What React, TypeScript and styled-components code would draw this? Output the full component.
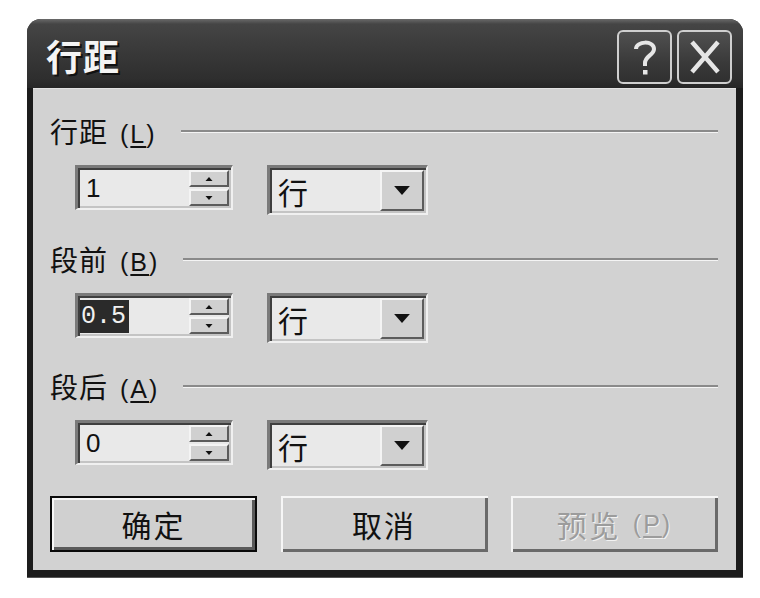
import React from "react";
import styled, { createGlobalStyle } from "styled-components";

const Global = createGlobalStyle`
  html, body { margin: 0; padding: 0; background: #ffffff; }
  body { font-family: "Noto Sans CJK SC", "Noto Sans", sans-serif; }
`;

const Page = styled.div`
  padding: 19px 0 0 27px;
  width: 760px;
  height: 598px;
  box-sizing: border-box;
`;

const Window = styled.div`
  width: 716px;
  height: 559px;
  background: #1c1c1c;
  border-radius: 14px 14px 0 0;
  display: flex;
  flex-direction: column;
  box-sizing: border-box;
  padding: 0 7px 7px 6px;
  border-bottom: 1px solid #555;
`;

const TitleBar = styled.div`
  height: 69px;
  margin: 0 -7px 0 -6px;
  border-radius: 14px 14px 0 0;
  background: linear-gradient(#6a6a6a 0px, #454545 5px, #3a3a3a 30px, #2e2e2e 60px, #262626 69px);
  display: flex;
  align-items: center;
  padding: 0 11px 0 19px;
  box-sizing: border-box;
`;

const Title = styled.div`
  flex: 1;
  color: #f4f4f4;
  font-size: 36px;
  font-weight: 700;
  letter-spacing: 1px;
  text-shadow: 2px 2px 0 #111;
  padding-top: 2px;
`;

const CapButton = styled.div`
  width: 55px;
  height: 54px;
  margin-left: 5px;
  box-sizing: border-box;
  border: 2px solid #cfcfcf;
  border-radius: 6px;
  background: linear-gradient(#505050 0%, #3a3a3a 60%, #303030 100%);
  display: flex;
  align-items: center;
  justify-content: center;
  margin-top: 6px;
`;

const Body = styled.div`
  flex: 1;
  background: #d2d2d2;
  border-top: 1px solid #e2e2e2;
  padding: 22px 18px 18px 17px;
  display: flex;
  flex-direction: column;
`;

const Section = styled.div<{ $gapAfter: number }>`
  display: flex;
  flex-direction: column;
  margin-bottom: ${(p) => p.$gapAfter}px;
`;

const LabelRow = styled.div`
  height: 40px;
  display: flex;
  align-items: center;
`;

const Label = styled.div`
  font-size: 28px;
  color: #111;
  white-space: nowrap;
  letter-spacing: 1px;
`;

const Mnemonic = styled.span`
  font-family: "Liberation Sans", sans-serif;
  font-size: 25px;
  margin-left: 12px;
  letter-spacing: 2px;
  & u { text-decoration-thickness: 2px; text-underline-offset: 3px; }
`;

const Separator = styled.div`
  flex: 1;
  margin-left: 24px;
  height: 0;
  border-top: 2px solid #8a8a8a;
  border-bottom: 1px solid #f4f4f4;
  margin-top: 1px;
`;

const InputRow = styled.div`
  display: flex;
  align-items: flex-start;
  margin-top: 14px;
  padding-left: 25px;
  gap: 34px;
  height: 50px;
`;

const Sunken = styled.div<{ $w: number; $h: number }>`
  width: ${(p) => p.$w}px;
  height: ${(p) => p.$h}px;
  box-sizing: border-box;
  border-top: 3px solid #7a7a7a;
  border-left: 3px solid #7a7a7a;
  border-right: 2px solid #f0f0f0;
  border-bottom: 2px solid #f0f0f0;
  box-shadow: inset 2px 2px 0 #3e3e3e, inset -2px -2px 0 #c4c4c4;
  background: #e9e9e9;
  display: flex;
  align-items: stretch;
`;

const Field = styled.div`
  flex: 1;
  display: flex;
  align-items: center;
  padding-left: 8px;
  font-family: "Liberation Sans", sans-serif;
  font-size: 26px;
  color: #111;
`;

const Selected = styled.span`
  background: #2a2a2a;
  color: #f0f0f0;
  font-family: "Liberation Mono", monospace;
  font-size: 25px;
  padding: 2px 3px 2px 1px;
  margin-left: -6px;
`;

const SpinCol = styled.div`
  width: 40px;
  display: flex;
  flex-direction: column;
  padding: 2px 2px 2px 0;
  gap: 2px;
`;

const Raised = styled.div`
  flex: 1;
  box-sizing: border-box;
  background: #d0d0d0;
  border-top: 2px solid #f4f4f4;
  border-left: 2px solid #f4f4f4;
  border-right: 2px solid #5c5c5c;
  border-bottom: 2px solid #5c5c5c;
  display: flex;
  align-items: center;
  justify-content: center;
`;

const ComboText = styled.div`
  flex: 1;
  display: flex;
  align-items: center;
  padding-left: 8px;
  font-size: 30px;
  color: #111;
`;

const DropBtn = styled(Raised)`
  flex: 0 0 44px;
  margin: 2px 2px 2px 0;
`;

const ButtonRow = styled.div`
  margin-top: auto;
  display: flex;
  justify-content: space-between;
`;

const PushButton = styled.div<{ $default?: boolean; $disabled?: boolean }>`
  width: 207px;
  height: 56px;
  box-sizing: border-box;
  background: #d0d0d0;
  border: ${(p) => (p.$default ? "2px solid #0a0a0a" : "0")};
  box-shadow: ${(p) =>
    p.$default
      ? "inset 2px 2px 0 #f6f6f6, inset -3px -3px 0 #5a5a5a"
      : "inset 2px 2px 0 #f6f6f6, inset -3px -3px 0 #6a6a6a"};
  display: flex;
  align-items: center;
  justify-content: center;
  font-size: 30px;
  color: ${(p) => (p.$disabled ? "#9c9c9c" : "#111")};
  text-shadow: ${(p) => (p.$disabled ? "1px 1px 0 #f2f2f2" : "none")};
  letter-spacing: 2px;
`;

const Arrow = ({ dir, size = 8 }: { dir: "up" | "down"; size?: number }) => (
  <svg width={size * 2} height={size} viewBox="0 0 16 8">
    {dir === "up" ? <polygon points="8,0 15,8 1,8" fill="#111" /> : <polygon points="1,0 15,0 8,8" fill="#111" />}
  </svg>
);

const SpinBox = ({ children }: { children: React.ReactNode }) => (
  <Sunken $w={158} $h={45}>
    <Field>{children}</Field>
    <SpinCol>
      <Raised>
        <Arrow dir="up" size={4} />
      </Raised>
      <Raised>
        <Arrow dir="down" size={4} />
      </Raised>
    </SpinCol>
  </Sunken>
);

const Combo = () => (
  <Sunken $w={161} $h={50}>
    <ComboText>行</ComboText>
    <DropBtn>
      <Arrow dir="down" size={9} />
    </DropBtn>
  </Sunken>
);

const sections: { label: string; key: string; value: React.ReactNode; gap: number }[] = [
  { label: "行距", key: "L", value: "1", gap: 24 },
  { label: "段前", key: "B", value: <Selected>0.5</Selected>, gap: 23 },
  { label: "段后", key: "A", value: "0", gap: 0 },
];

export default function App() {
  return (
    <>
      <Global />
      <Page>
        <Window>
          <TitleBar>
            <Title>行距</Title>
            <CapButton>
              <svg width="30" height="40" viewBox="0 0 30 40">
                <path d="M6 12 C6 4 24 3 24 12 C24 18 15 19 15 26 L15 29" fill="none" stroke="#e6e6e6" strokeWidth="4" />
                <rect x="13" y="33" width="4.5" height="4.5" fill="#e6e6e6" />
              </svg>
            </CapButton>
            <CapButton>
              <svg width="34" height="36" viewBox="0 0 34 36">
                <path d="M4 3 L30 33 M30 3 L4 33" stroke="#e6e6e6" strokeWidth="4.5" />
              </svg>
            </CapButton>
          </TitleBar>
          <Body>
            {sections.map((s) => (
              <Section key={s.key} $gapAfter={s.gap}>
                <LabelRow>
                  <Label>
                    {s.label}
                    <Mnemonic>
                      (<u>{s.key}</u>)
                    </Mnemonic>
                  </Label>
                  <Separator />
                </LabelRow>
                <InputRow>
                  <SpinBox>{s.value}</SpinBox>
                  <Combo />
                </InputRow>
              </Section>
            ))}
            <ButtonRow>
              <PushButton $default>确定</PushButton>
              <PushButton>取消</PushButton>
              <PushButton $disabled>
                预览<Mnemonic>(<u>P</u>)</Mnemonic>
              </PushButton>
            </ButtonRow>
          </Body>
        </Window>
      </Page>
    </>
  );
}
